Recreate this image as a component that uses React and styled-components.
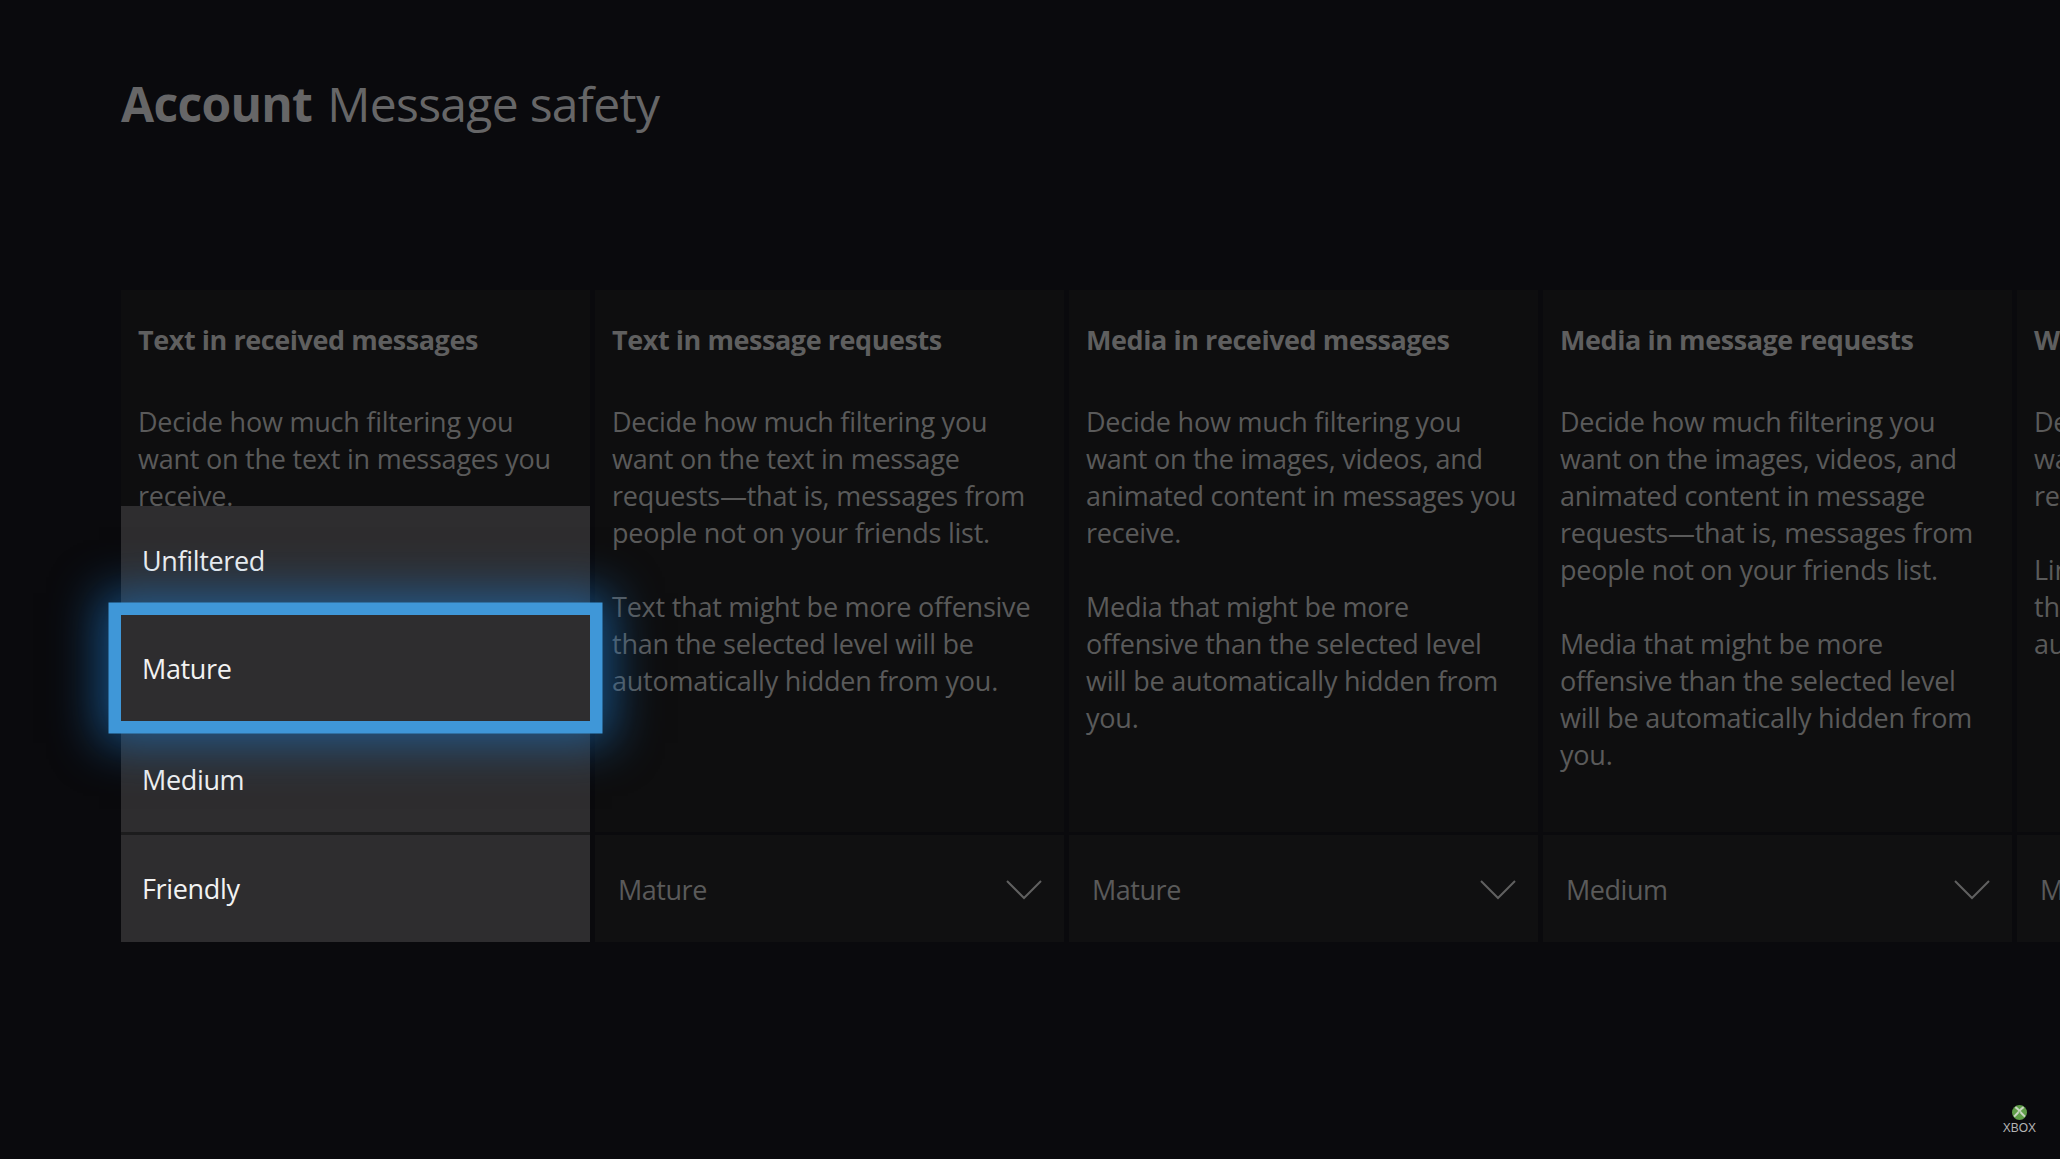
import React from "react";
import styled, { createGlobalStyle } from "styled-components";

const Global = createGlobalStyle`
  html, body { margin: 0; padding: 0; background: #0a0a0d; }
  body { font-family: "Open Sans", "Noto Sans", "Liberation Sans", sans-serif; }
`;

const Page = styled.div`
  width: 2060px;
  height: 1159px;
  overflow: hidden;
  background: #0a0a0d;
  display: flex;
  flex-direction: column;
  box-sizing: border-box;
  padding: 70px 0 0 121px;
`;

const Header = styled.h1`
  margin: 0;
  height: 220px;
  font-size: 48px;
  line-height: 68px;
  font-weight: 400;
  color: #666667;
  letter-spacing: -0.7px;
  white-space: nowrap;
`;

const HeaderStrong = styled.strong`
  font-weight: 700;
  margin-right: 15px;
`;

const Columns = styled.div`
  display: flex;
  gap: 5px;
  width: 2400px;
`;

const Column = styled.section`
  position: relative;
  flex: 0 0 469px;
  display: flex;
  flex-direction: column;
  gap: 3px;
`;

const Info = styled.div`
  height: 542px;
  box-sizing: border-box;
  background: #0e0e0f;
  padding: 31px 20px 0 17px;
`;

const Title = styled.h2`
  margin: 0 0 44px;
  font-size: 27px;
  line-height: 38px;
  font-weight: 700;
  color: #5f5f5f;
  letter-spacing: -0.44px;
  white-space: nowrap;
`;

const Desc = styled.p`
  margin: 0 0 37px;
  font-size: 27px;
  line-height: 37px;
  color: #5a5a5a;
  letter-spacing: -0.23px;
`;

const Select = styled.div`
  height: 107px;
  box-sizing: border-box;
  background: #101011;
  padding: 1px 22px 0 23px;
  display: flex;
  align-items: center;
  justify-content: space-between;
  font-size: 27px;
  letter-spacing: -0.47px;
  color: #5a5a5a;
  white-space: nowrap;
`;

const Chevron = styled.svg`
  width: 36px;
  height: 21px;
  flex: none;
`;

const Dropdown = styled.ul`
  position: absolute;
  left: 0;
  right: 0;
  bottom: 0;
  margin: 0;
  padding: 0;
  list-style: none;
  display: flex;
  flex-direction: column;
`;

const Option = styled.li`
  position: relative;
  z-index: ${(p) => (p.$focused ? 2 : 1)};
  height: ${(p) => p.$h}px;
  box-sizing: border-box;
  display: flex;
  align-items: center;
  padding: ${(p) => p.$top || 0}px 0 0 21px;
  background: #2e2d2f;
  color: #f2f2f2;
  font-size: 27px;
  letter-spacing: -0.35px;
  ${(p) => p.$divided && "border-top: 3px solid #1c1c1d;"}
  ${(p) =>
    p.$focused &&
    "box-shadow: 0 0 0 12.5px #3f97d8, 0 0 44px 22px rgba(28, 118, 198, 0.62);"}
`;

const Footer = styled.div`
  margin-top: auto;
  align-self: flex-end;
  margin-right: 24px;
  margin-bottom: 25px;
  display: flex;
  flex-direction: column;
  align-items: center;
  gap: 2px;
`;

const XboxWord = styled.span`
  font-family: "Liberation Sans", sans-serif;
  font-size: 12px;
  line-height: 12px;
  color: #b4b4b4;
`;

const chevron = (
  <Chevron viewBox="0 0 36 21" fill="none" stroke="#606060" strokeWidth="2">
    <path d="M1 2 L18 19 L35 2" />
  </Chevron>
);

const columns = [
  {
    title: "Text in received messages",
    paragraphs: ["Decide how much filtering you want on the text in messages you receive."],
    value: "",
  },
  {
    title: "Text in message requests",
    paragraphs: [
      "Decide how much filtering you want on the text in message requests—that is, messages from people not on your friends list.",
      "Text that might be more offensive than the selected level will be automatically hidden from you.",
    ],
    value: "Mature",
  },
  {
    title: "Media in received messages",
    paragraphs: [
      "Decide how much filtering you want on the images, videos, and animated content in messages you receive.",
      "Media that might be more offensive than the selected level will be automatically hidden from you.",
    ],
    value: "Mature",
  },
  {
    title: "Media in message requests",
    paragraphs: [
      "Decide how much filtering you want on the images, videos, and animated content in message requests—that is, messages from people not on your friends list.",
      "Media that might be more offensive than the selected level will be automatically hidden from you.",
    ],
    value: "Medium",
  },
  {
    title: "Web links in received messages",
    paragraphs: [
      "Decide how much filtering you want on the links in messages you receive.",
      "Links that might be more offensive than the selected level will be automatically hidden from you.",
    ],
    value: "Mature",
  },
];

export default function App() {
  return (
    <Page>
      <Global />
      <Header>
        <HeaderStrong>Account</HeaderStrong>Message safety
      </Header>
      <Columns>
        {columns.map((c, i) => (
          <Column key={c.title}>
            <Info>
              <Title>{c.title}</Title>
              {c.paragraphs.map((t) => (
                <Desc key={t}>{t}</Desc>
              ))}
            </Info>
            <Select>
              {c.value}
              {c.value && chevron}
            </Select>
            {i === 0 && (
              <Dropdown>
                <Option $h={109}>Unfiltered</Option>
                <Option $focused $h={106}>Mature</Option>
                <Option $h={111} $top={5}>Medium</Option>
                <Option $divided $h={110}>Friendly</Option>
              </Dropdown>
            )}
          </Column>
        ))}
      </Columns>
      <Footer>
        <svg width="15" height="15" viewBox="0 0 18 18">
          <circle cx="9" cy="9" r="9" fill="#5f9e48" />
          <path d="M4 2.5 Q9 6 9 8 Q9 6 14 2.5 M2.5 14 Q9 7 9 8 Q9 7 15.5 14" stroke="#c9d6c2" strokeWidth="2.4" fill="none" />
        </svg>
        <XboxWord>XBOX</XboxWord>
      </Footer>
    </Page>
  );
}
